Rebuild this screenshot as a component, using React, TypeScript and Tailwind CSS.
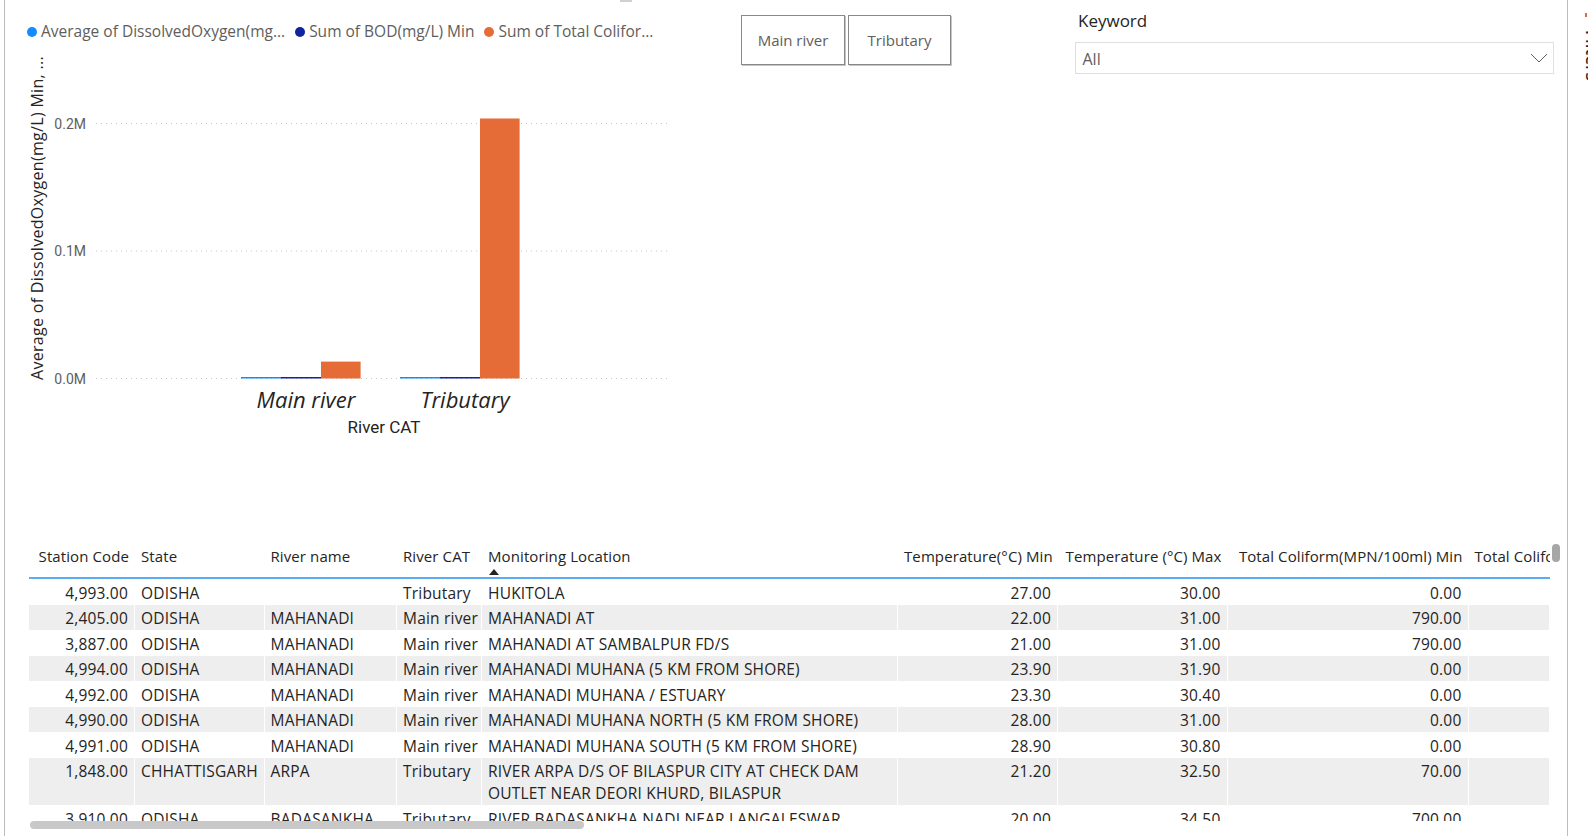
import React from 'react';

const font = "font-['Segoe_UI','Open_Sans',sans-serif]";

const cols = [
  { name: 'Station Code', w: 'w-[106px]', right: true },
  { name: 'State', w: 'w-[129.5px]' },
  { name: 'River name', w: 'w-[132.5px]' },
  { name: 'River CAT', w: 'w-[85px]' },
  { name: 'Monitoring Location', w: 'w-[416px]', sorted: true },
  { name: 'Temperature(°C) Min', w: 'w-[160px]', right: true },
  { name: 'Temperature (°C) Max', w: 'w-[169.5px]', right: true },
  { name: 'Total Coliform(MPN/100ml) Min', w: 'w-[241px]', right: true },
  { name: 'Total Coliform(MPN/100ml) Max', w: 'w-[81.5px]' },
];

const rows: string[][] = [
  ['4,993.00', 'ODISHA', '', 'Tributary', 'HUKITOLA', '27.00', '30.00', '0.00', ''],
  ['2,405.00', 'ODISHA', 'MAHANADI', 'Main river', 'MAHANADI AT', '22.00', '31.00', '790.00', ''],
  ['3,887.00', 'ODISHA', 'MAHANADI', 'Main river', 'MAHANADI AT SAMBALPUR FD/S', '21.00', '31.00', '790.00', ''],
  ['4,994.00', 'ODISHA', 'MAHANADI', 'Main river', 'MAHANADI MUHANA (5 KM FROM SHORE)', '23.90', '31.90', '0.00', ''],
  ['4,992.00', 'ODISHA', 'MAHANADI', 'Main river', 'MAHANADI MUHANA / ESTUARY', '23.30', '30.40', '0.00', ''],
  ['4,990.00', 'ODISHA', 'MAHANADI', 'Main river', 'MAHANADI MUHANA NORTH (5 KM FROM SHORE)', '28.00', '31.00', '0.00', ''],
  ['4,991.00', 'ODISHA', 'MAHANADI', 'Main river', 'MAHANADI MUHANA SOUTH (5 KM FROM SHORE)', '28.90', '30.80', '0.00', ''],
  ['1,848.00', 'CHHATTISGARH', 'ARPA', 'Tributary', 'RIVER ARPA D/S OF BILASPUR CITY AT CHECK DAM\nOUTLET NEAR DEORI KHURD, BILASPUR', '21.20', '32.50', '70.00', ''],
  ['3,910.00', 'ODISHA', 'BADASANKHA', 'Tributary', 'RIVER BADASANKHA NADI NEAR LANGALESWAR', '20.00', '34.50', '700.00', ''],
];

function Legend() {
  const items = [
    { c: 'bg-[#118DFF]', t: 'Average of DissolvedOxygen(mg...' },
    { c: 'bg-[#12239E]', t: 'Sum of BOD(mg/L) Min' },
    { c: 'bg-[#E66C37]', t: 'Sum of Total Colifor...' },
  ];
  return (
    <div className="flex items-center gap-[10px] h-[20px] mt-[22px] pl-[22px] text-[15.5px] text-[#605E5C]">
      {items.map((i) => (
        <div key={i.t} className="flex items-center gap-[4px] whitespace-nowrap">
          <span className={`w-[10px] h-[10px] rounded-full ${i.c}`} />
          <span>{i.t}</span>
        </div>
      ))}
    </div>
  );
}

function Chart() {
  const grid = [78.5, 206, 333.5];
  const labels = ['0.2M', '0.1M', '0.0M'];
  return (
    <svg width="664" height="400" className="mt-[3px] block">
      <text
        transform="translate(31.5,335) rotate(-90)"
        fontSize="16"
        letterSpacing="0.3"
        fill="#252423"
        dominantBaseline="central"
        fontFamily="'Segoe UI','Open Sans',sans-serif"
      >
        Average of DissolvedOxygen(mg/L) Min, ...
      </text>
      {grid.map((y, i) => (
        <g key={y}>
          <line x1="91" x2="663" y1={y} y2={y} stroke="#c8c6c4" strokeDasharray="1 4" />
          <text x="81" y={y} textAnchor="end" dominantBaseline="central" fontSize="14" fill="#605E5C" fontFamily="Roboto,sans-serif">
            {labels[i]}
          </text>
        </g>
      ))}
      <rect x="236" y="332" width="39.5" height="1.5" fill="#118DFF" />
      <rect x="275.5" y="332" width="40.5" height="1.5" fill="#12239E" />
      <rect x="316" y="316.6" width="39.6" height="16.9" fill="#E66C37" />
      <rect x="395" y="332" width="39.5" height="1.5" fill="#118DFF" />
      <rect x="434.5" y="332" width="40.5" height="1.5" fill="#12239E" />
      <rect x="475" y="73.5" width="39.6" height="260" fill="#E66C37" />
      <text x="301" y="354" textAnchor="middle" dominantBaseline="central" fontSize="22" fontStyle="italic" fill="#252423" fontFamily="'Segoe UI','Open Sans',sans-serif">
        Main river
      </text>
      <text x="460" y="354" textAnchor="middle" dominantBaseline="central" fontSize="22" fontStyle="italic" fill="#252423" fontFamily="'Segoe UI','Open Sans',sans-serif">
        Tributary
      </text>
      <text x="379" y="382" textAnchor="middle" dominantBaseline="central" fontSize="17" fill="#252423" fontFamily="Roboto,sans-serif">
        River CAT
      </text>
    </svg>
  );
}

function Table() {
  return (
    <div className="ml-[24px] flex">
      <div className="w-[1521px] shrink-0">
        <div className="flex h-[41px] border-b-2 border-[#5CACF2] text-[15px] tracking-[0.1px] text-[#252423]">
          {cols.map((c) => (
            <div key={c.name} className={`${c.w} shrink-0 px-[6px] pt-[8px] overflow-hidden whitespace-nowrap ${c.right ? 'text-right' : ''}`}>
              <div className="leading-[20px]">{c.name}</div>
              {c.sorted && (
                <div className="w-0 h-0 mt-[3px] ml-[1px] border-l-[5px] border-r-[5px] border-b-[6px] border-l-transparent border-r-transparent border-b-[#252423]" />
              )}
            </div>
          ))}
        </div>
        <div className="h-[242px] overflow-hidden text-[15.5px] tracking-[0.2px] text-[#252423]">
          {rows.map((r, ri) => (
            <div key={ri} className={`flex ${ri % 2 === 1 ? 'bg-[#EEEEEE]' : 'bg-white'}`}>
              {r.map((cell, ci) => (
                <div
                  key={ci}
                  className={`${cols[ci].w} shrink-0 px-[6px] pt-[2.5px] pb-[1px] leading-[22px] border-r border-white whitespace-pre overflow-hidden ${cols[ci].right ? 'text-right' : ''}`}
                >
                  {cell}
                </div>
              ))}
            </div>
          ))}
        </div>
        <div className="h-[9px] flex items-start">
          <div className="ml-[1px] w-[554px] h-[8px] rounded-full bg-[#C8C8C8]" />
        </div>
      </div>
      <div className="ml-[1.5px] mt-[6px] w-[8px] h-[18px] shrink-0 rounded-full bg-[#A6A6A6]" />
    </div>
  );
}

export default function App() {
  return (
    <div className={`w-[1588px] h-[836px] bg-white overflow-hidden flex ${font}`}>
      <div className="ml-[4px] w-[1564px] shrink-0 h-full border-l border-r border-[#BDBDBD] flex flex-col overflow-hidden">
        <div className="h-[538px] shrink-0 flex relative">
          <div className="absolute left-[615px] top-0 w-[12px] h-[2px] bg-[#D0D0D0]" />
          <div className="w-[664px] shrink-0 flex flex-col">
            <Legend />
            <Chart />
          </div>
          <div className="ml-[72px] pt-[15px] flex gap-[3px] h-fit">
            <button className="w-[104px] h-[50px] border border-[#8A8886] shadow-[1px_1px_0_#c8c6c4] text-[15px] text-[#605E5C] bg-white">
              Main river
            </button>
            <button className="w-[103px] h-[50px] border border-[#8A8886] shadow-[1px_1px_0_#c8c6c4] text-[15px] text-[#605E5C] bg-white">
              Tributary
            </button>
          </div>
          <div className="ml-[123.5px] w-[479px] shrink-0 pt-[10px]">
            <div className="pl-[3.5px] text-[17px] leading-[22px] text-[#252423]">Keyword</div>
            <div className="mt-[9.5px] h-[32px] border border-[#E1DFDD] flex items-center justify-between pl-[7px] pr-[5px]">
              <span className="text-[16px] text-[#605E5C] pt-[3px]">All</span>
              <svg width="18" height="10" viewBox="0 0 18 10">
                <polyline points="1,1 9,9 17,1" fill="none" stroke="#605E5C" strokeWidth="1" />
              </svg>
            </div>
          </div>
        </div>
        <Table />
      </div>
      <div className="w-[20px] h-full relative overflow-hidden">
        <div className="absolute left-[17px] top-[13px] w-[2px] h-[4px] bg-[#E66C37]" />
        <div className="pl-[11px] pt-[30px] [writing-mode:vertical-rl] text-[17px] font-semibold text-[#252423]">
          Filters
        </div>
      </div>
    </div>
  );
}
